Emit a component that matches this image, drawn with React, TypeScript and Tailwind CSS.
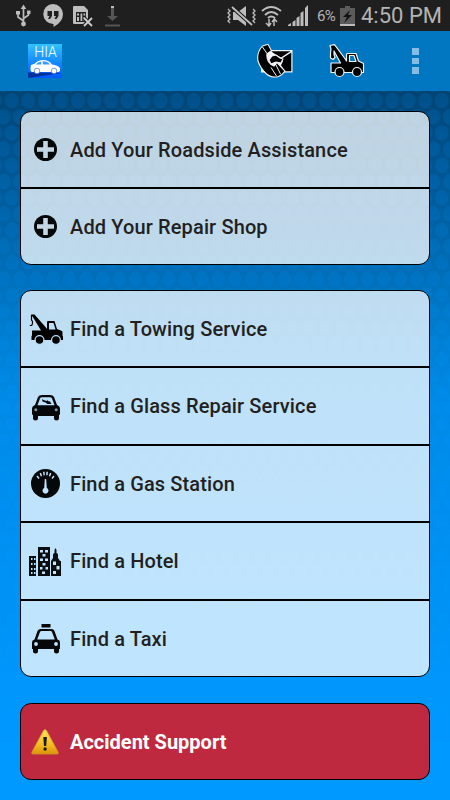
import React from "react";

interface IconProps {
  className?: string;
}

interface RowProps {
  label: string;
  icon: React.ReactNode;
  className: string;
}

const PlusIcon = ({ className }: IconProps) => (
  <svg className={className} viewBox="0 0 24 24">
    <circle cx="12.500" cy="11.500" r="11.500" fill="#050708" />
    <path d="M12.500 3v17M4 11.500h17" stroke="#c2d6e4" strokeWidth="4.600" />
  </svg>
);

const TowTruckIcon = ({ className }: IconProps) => (
  <svg className={className} viewBox="0 0 34 31">
    <path d="M2 .5h3.500L16.500 13l1.500 2V8q0-1 1-1h6.500l2.500 8 5 2q.5.500.5 1v4l.5.500V26H2.500v-4l.5-.500v-5h9L4.500 4z" />
    <path d="M2.500 1v5l1 1.500v2l-.8 2H.8" fill="none" stroke="#000" strokeWidth="1.200" />
    <path d="M20 9h4.500l2 6.500H20z" fill="#bde0fa" />
    <circle cx="10.500" cy="26" r="4.400" stroke="#bde0fa" strokeWidth="1.200" />
    <circle cx="27" cy="26" r="4.400" stroke="#bde0fa" strokeWidth="1.200" />
  </svg>
);

const GlassIcon = ({ className }: IconProps) => (
  <svg className={className} viewBox="0 0 28 26" fill="#050708">
    <path d="M6 2q1-2 4-2h8q3 0 4 2l3 8q3 1 3 4v5q0 1-1 1v3q0 2.500-2.500 2.500T22 23v-2H6v2q0 2.500-2.500 2.500T1 23v-3q-1 0-1-1v-5q0-3 3-4z" />
    <path d="M8 3.500q.5-1.300 2-1.300h8q1.500 0 2 1.300l2.500 6.700h-17z" fill="#bde2fe" />
    <path d="m10 4 1.500 1 3 1 1.500-1.500L15.500 6l2.500.500 1.500 2.500h-4l-2-1.500-3-1z" />
    <circle cx="3.800" cy="14.800" r="1.500" fill="#7c96aa" />
    <circle cx="24.200" cy="14.800" r="1.500" fill="#7c96aa" />
  </svg>
);

const GaugeIcon = ({ className }: IconProps) => (
  <svg className={className} viewBox="0 0 30 30">
    <circle cx="15.500" cy="14.500" r="14.500" fill="#050708" />
    <path d="m7 7 2 2.500M10.300 4l1.200 3.200M13.800 2.700l.3 3.500M17.200 2.700l-.3 3.500M20.700 4l-1.200 3.200M24 7l-2 2.500" stroke="#bfe4ff" strokeWidth="1.500" />
    <path d="M14.800 10h1.400l.6 9a3 3 0 1 1-2.600 0z" fill="#bfe4ff" />
  </svg>
);

const HotelIcon = ({ className }: IconProps) => (
  <svg className={className} viewBox="0 0 32 29">
    <path d="M0 9h7v20H0zM9 0h12v29H9zM22 29V14l2-3V7l1.500-1V3l1-2 1 2v3L29 7v4l2 3h1v15z" fill="#0b0e10" />
    <path
      d="M2 11h1.500v2H2zm3 0h1.500v2H5zM2 16h1.500v2H2zm3 0h1.500v2H5zM2 21h1.500v2H2zm3 0h1.500v2H5zM2 25h1.500v2H2zm3 0h1.500v2H5zM11 3h3v2.500h-3zm5 0h3v2.500h-3zM13.500 7h3v2.500h-3zM11 11.500h3V14h-3zM16 11.500h3V14h-3zM13.500 16h3v2.500h-3zM11 20h2.500v2.500H11zM16.500 20H19v2.500h-2.500zM13 24.500h3V27h-3zM24 14.500h3V18h-3zM27.500 19h3v3.500h-3zM24 24h3v3h-3z"
      fill="#bfe4ff"
    />
  </svg>
);

const TaxiIcon = ({ className }: IconProps) => (
  <svg className={className} viewBox="0 0 28 30" fill="#050708">
    <path d="M9.500 0h9v3.500h-9zM5.500 7q1-2 3-2h11q2 0 3 2l3 8.500q2.500.500 2.500 3V25h-1v2q0 2.500-2.500 2.500T22 27v-2H6v2q0 2.500-2.500 2.500T1 27v-2H0v-6.500q0-2.500 2.500-3z" />
    <path d="M8 8q.5-1 1.500-1h9q1 0 1.500 1l2.800 7.500H5.200z" fill="#bfe4ff" />
    <circle cx="4" cy="20" r="1.900" fill="#bfe4ff" />
    <circle cx="24" cy="20" r="1.900" fill="#bfe4ff" />
  </svg>
);

const WarningIcon = ({ className }: IconProps) => (
  <svg className={className} viewBox="0 0 28 26">
    <defs>
      <linearGradient id="warn" x2="0" y2="1">
        <stop stopColor="#ffe65c" />
        <stop offset=".6" stopColor="#f5bd22" />
        <stop offset="1" stopColor="#dc9208" />
      </linearGradient>
    </defs>
    <path d="M12.500 1.500q1.500-2 3 0L27 23q.8 2-1 2H2q-1.800 0-1-2z" fill="url(#warn)" stroke="#d49a25" strokeWidth=".8" />
    <path d="M12.300 8h3.600l-.7 9h-2.200z" fill="#1c1c10" />
    <circle cx="14.100" cy="20" r="1.700" fill="#1c1c10" />
  </svg>
);

const ContactIcon = ({ className }: IconProps) => (
  <svg className={className} viewBox="0 0 36 34">
    <path d="M4 6h31.500v22.500H4z" fill="#f2f6f9" />
    <path d="M14 7.300h19.500L24 13.500 18 10zM34.300 8.500v18.700H28l-4-6 2-4-1.500-2.500z" />
    <path
      d="m5.500 2 5.500-1.700 3.500 6.500-4.500 3q-.5 5 1.500 8t5.500 4.200l3-3.500L28 27q-2.500 4-6.500 5.500-7 2-12.500-3T1 17Q-.5 8.500 5.500 2z"
      stroke="#f2f6f9"
      strokeWidth="1.100"
    />
    {/* hand on the receiver */}
    <path d="m12 16 3-4 4-1 4 3 3 1-2 4-5-1-5 2z" stroke="#f2f6f9" strokeWidth="1.100" />
    <path d="m5.500 3 4.500 6.500M14 23.500l5.500 8.500M18.500 20l5 10" fill="none" stroke="#f2f6f9" />
  </svg>
);

const HeaderTruckIcon = ({ className }: IconProps) => (
  <svg className={className} viewBox="0 0 36 34">
    <g stroke="#f2f6f9" strokeWidth="1.200" strokeLinejoin="round">
      <path d="M1 1.500 5.500.7 15.500 14l2 3V10.500q0-1 1-1H27l2.500 7.500 5 2.500v9H2v-9.500h9.500L5 7v3.500l1 3-2 2-2.500-1.500L1.500 9 2 5z" />
      <path d="M20.500 11.500H25l2 6h-6.500z" fill="#0077c0" />
      <circle cx="10.500" cy="28" r="4.500" />
      <circle cx="28" cy="28" r="4.500" />
    </g>
  </svg>
);

const AppLogo = () => (
  <svg className="h-[34px] w-[34px]" viewBox="0 0 34 34">
    <defs>
      <linearGradient id="logo" x2="0" y2="1">
        <stop stopColor="#2fc4ff" />
        <stop offset="1" stopColor="#0057ff" />
      </linearGradient>
    </defs>
    <path d="M0 0h34v34H0z" fill="url(#logo)" />
    <path d="M0 28.500 34 29 0 34z" fill="#003199" />
    <text x="17.500" y="13.300" textAnchor="middle" fontSize="14" fill="#fff" className="font-[Roboto,sans-serif] font-light">
      HIA
    </text>
    <path d="M3 21q2-1 4-1.500Q10 16 15 16q6 0 9 4.500 6 .5 8 3.500v3l-1.500 1H4q-2-1-1.500-4z" fill="#fff" />
    <path d="M7.500 20.500q2.500-2.700 5.500-3l.5 3zM14.500 17.300q5-.3 7.500 3.200h-7z" fill="#1a86ff" opacity=".85" />
    <circle cx="9" cy="27" r="2.800" fill="#fff" stroke="#1459d8" strokeWidth=".6" />
    <circle cx="26" cy="27" r="2.800" fill="#fff" stroke="#1459d8" strokeWidth=".6" />
  </svg>
);

const StatusBar = () => (
  <div className="flex h-[31px] items-center bg-[#1f1f1f] pl-4 text-[#b4b4b4]">
    <svg className="mr-3 h-[23px] w-[15px] shrink-0" viewBox="0 0 15 23">
      <path d="M7.500 4v14M7.500 17 2 13V9M7.500 14.500l5-3.500V7" fill="none" stroke="#bdbdbd" strokeWidth="1.700" />
      <path d="M7.500.5 10.300 5H4.700zM0 7h4v3.500H0zM11 6.500h3.500V10H11z" fill="#bdbdbd" />
      <circle cx="7.500" cy="20" r="2.400" fill="#bdbdbd" />
    </svg>
    <svg className="mr-[10px] h-[23px] w-5 shrink-0" viewBox="0 0 20 23">
      <path d="M10 0a10 10 0 0 1 10 10q0 8-9.500 13v-3A10 10 0 0 1 10 0z" fill="#bdbdbd" />
      <path d="M4.500 7H9v5l-2 3H5l1.500-3h-2zM11 7h4.500v5l-2 3h-2l1.500-3h-2z" fill="#1f1f1f" />
    </svg>
    <svg className="mr-3 h-[22px] w-5 shrink-0" viewBox="0 0 20 22">
      <path d="M1 1h10l4 4v14H1q-1 0-1-1V2q0-1 1-1z" fill="#bdbdbd" />
      <path d="M3 7h10v10H3z" fill="#1f1f1f" />
      <path d="M4 8.500h2v2H4zm0 3.500h2v4H4zm3.500-3.500h1.800V16H7.500zm3 0h1.800v2h-1.800zm0 3.500h1.800v4h-1.800z" fill="#bdbdbd" />
      <path d="m11 13 8 8M19 13l-8 8" stroke="#1f1f1f" strokeWidth="4" />
      <path d="m11 13 8 8M19 13l-8 8" stroke="#cfcfcf" strokeWidth="1.800" />
    </svg>
    <svg className="h-[22px] w-[15px] shrink-0" viewBox="0 0 15 22">
      <path d="M6 1h3v10h4l-5.500 5L2 11h4zM0 19.500h15v2H0z" fill="#555" />
      <path d="M6 1h3v2H6z" fill="#bbb" />
    </svg>
    <svg className="ml-[107px] h-5 w-[30px] shrink-0" viewBox="0 0 30 20">
      <path d="M6 6h5l8-6v20l-8-6H6z" fill="#bdbdbd" />
      <path d="m5 1 20 18" stroke="#1f1f1f" strokeWidth="4" />
      <path d="m5 1 20 18" stroke="#bdbdbd" strokeWidth="1.800" />
      <path d="m1 3 2 2-2 2 2 2-2 2 2 2-2 2 2 2M26 3l2 2-2 2 2 2-2 2 2 2-2 2 2 2" fill="none" stroke="#bdbdbd" strokeWidth="1.300" />
    </svg>
    <svg className="ml-1 h-[22px] w-[21px] shrink-0" viewBox="0 0 21 22">
      <path d="M1 6q9-8 19 0M4 10q6-6 13 0M7 13q3-3 7 0" fill="none" stroke="#bdbdbd" strokeWidth="2" />
      <path d="M8 14v7M5 18l3 3 2-3M13 21v-7M11 17l2.500-3 2.500 3" fill="none" stroke="#bdbdbd" strokeWidth="1.500" />
    </svg>
    <svg className="ml-[6px] h-[21px] w-[21px] shrink-0" viewBox="0 0 21 21" fill="#bdbdbd">
      <path d="M0 21v-1l3-2v3zM4.500 21v-4l3-2v6zM8.500 21v-8l3-2v10zM12.500 21V8l3-2v15zM17 21V3l3-3v21z" />
    </svg>
    <span className="ml-2 w-[23px] pt-px text-[15px] tracking-[-0.6px]">6%</span>
    <svg className="h-5 w-[15px] shrink-0" viewBox="0 0 15 20">
      <path d="M0 2h5V0h5v2h5v18H0z" fill="#5b5b5b" />
      <path d="M0 18h15v2H0z" fill="#bbb" />
      <path d="m10 4-7 7h4l-3 6 8-8H8z" fill="#111" />
    </svg>
    <span className="ml-[6px] text-[22px] leading-none whitespace-nowrap">4:50 PM</span>
  </div>
);

// staggered ovals on a darker ground, fading out towards the bottom of the screen
const Backdrop = () => (
  <svg className="absolute inset-0 h-full w-full" viewBox="0 0 450 709" preserveAspectRatio="none">
    <defs>
      <linearGradient id="sky" x2="0" y2="1">
        <stop stopColor="#004778" />
        <stop offset=".06" stopColor="#005592" />
        <stop offset=".25" stopColor="#007ccf" />
        <stop offset=".35" stopColor="#0090ee" />
        <stop offset=".43" stopColor="#0099ff" />
      </linearGradient>
      <linearGradient id="fade" x2="0" y2="1">
        <stop stopColor="#fff" />
        <stop offset=".3" stopColor="#bbb" />
        <stop offset=".5" stopColor="#777" />
        <stop offset=".92" stopColor="#000" />
      </linearGradient>
      <mask id="fadeMask">
        <path d="M0 0h450v709H0z" fill="url(#fade)" />
      </mask>
      <pattern id="ovals" width="16.540" height="32.350" x="3.430" y="1.600" patternUnits="userSpaceOnUse">
        <path d="M0 0h16.540v32.350H0z" fill="#003963" fillOpacity=".28" />
        <g fill="#0090f0" fillOpacity=".17" stroke="#002f52" strokeOpacity=".1">
          <ellipse cx="8.270" cy="8.100" rx="7.300" ry="8" />
          <ellipse cx="0" cy="24.250" rx="7.300" ry="8" />
          <ellipse cx="16.540" cy="24.250" rx="7.300" ry="8" />
        </g>
      </pattern>
    </defs>
    <path d="M0 0h450v709H0z" fill="url(#sky)" />
    <path d="M0 0h450v709H0z" fill="url(#ovals)" mask="url(#fadeMask)" />
  </svg>
);

const Row = ({ label, icon, className }: RowProps) => (
  <div className={`flex items-center ${className}`}>
    <div className="mr-px flex w-12 shrink-0 justify-center">{icon}</div>
    <span>{label}</span>
  </div>
);

const App: React.FC = () => {
  return (
    <div className="flex h-[800px] w-[450px] flex-col overflow-hidden font-[Roboto,sans-serif]">
      <StatusBar />

      {/* Action bar */}
      <div className="flex h-[60px] items-center bg-[#0077c0] pl-7">
        <AppLogo />
        <ContactIcon className="ml-[195px] h-[34px] w-9" />
        <HeaderTruckIcon className="ml-9 h-[34px] w-9" />
        <div className="ml-[47px] flex flex-col gap-[3px]">
          <span className="h-[6.500px] w-[6.500px] bg-[#84bce2]" />
          <span className="h-[6.500px] w-[6.500px] bg-[#84bce2]" />
          <span className="h-[6.500px] w-[6.500px] bg-[#84bce2]" />
        </div>
      </div>

      <div className="relative flex-1">
        <Backdrop />
        <div className="relative flex flex-col gap-[25px] px-5 pt-5 text-[20px] font-medium tracking-[0.13px] text-[#231f20]">
          <div className="divide-y-2 divide-black overflow-hidden rounded-[11px] border border-black bg-white/75">
            <Row label="Add Your Roadside Assistance" className="h-[77px]" icon={<PlusIcon className="h-6 w-6" />} />
            <Row label="Add Your Repair Shop" className="h-[75px]" icon={<PlusIcon className="h-6 w-6" />} />
          </div>

          <div className="divide-y-2 divide-black overflow-hidden rounded-[11px] border border-black bg-white/75">
            <Row label="Find a Towing Service" className="h-[77px]" icon={<TowTruckIcon className="mt-px ml-px h-[31px] w-[34px]" />} />
            <Row label="Find a Glass Repair Service" className="h-[78px]" icon={<GlassIcon className="mt-1 ml-px h-[26px] w-7" />} />
            <Row label="Find a Gas Station" className="h-[77px]" icon={<GaugeIcon className="h-[30px] w-[30px]" />} />
            <Row label="Find a Hotel" className="h-[78px]" icon={<HotelIcon className="h-[29px] w-8" />} />
            <Row label="Find a Taxi" className="h-[75px]" icon={<TaxiIcon className="ml-px h-[30px] w-7" />} />
          </div>

          <div className="mt-px rounded-[11px] border border-black bg-[#bf2940]">
            <Row label="Accident Support" className="h-[75px] font-bold tracking-normal text-white" icon={<WarningIcon className="h-[26px] w-7" />} />
          </div>
        </div>
      </div>
    </div>
  );
};

export default App;
